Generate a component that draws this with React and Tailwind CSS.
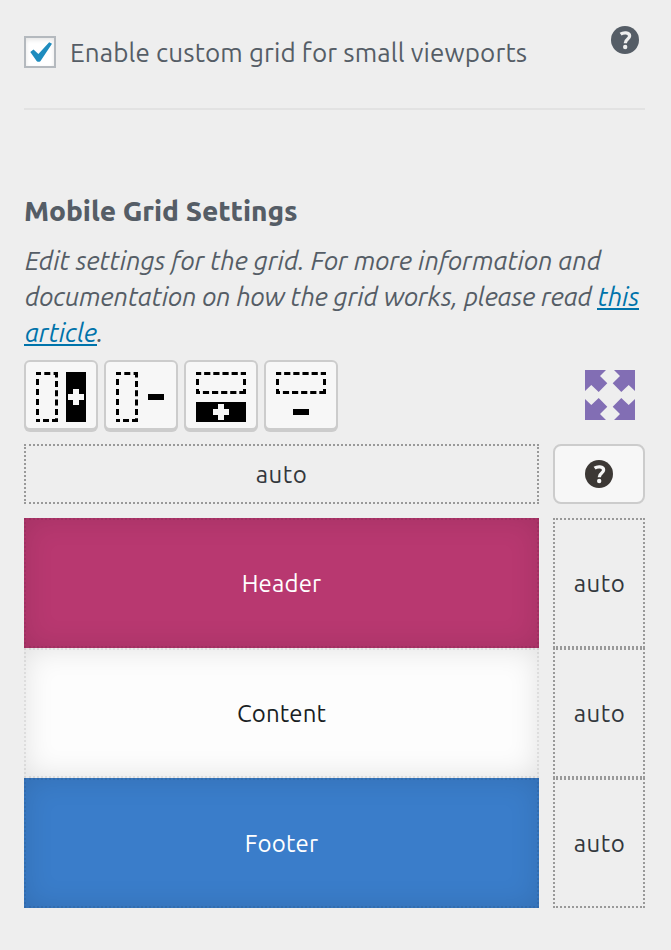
import React from "react";

const HelpIcon = ({ color, hole }) => (
  <svg width="28" height="28" viewBox="0 0 28 28" fill="none" className="block shrink-0">
    <circle cx="14" cy="14" r="14" fill={color} />
    <path d="M9.6 8.2C12 6.5 18.6 5.9 18.6 10.1C18.6 13.2 14.3 12.8 14.3 17.2" stroke={hole} strokeWidth="3.3" />
    <circle cx="14.2" cy="21" r="2.2" fill={hole} />
  </svg>
);

const ColumnOutline = () => (
  <g stroke="#000" strokeWidth="3">
    <path d="M1.5 0V50" strokeDasharray="6 4" strokeDashoffset="3" />
    <path d="M20.5 0V50" strokeDasharray="6 3.33" strokeDashoffset="0.4" />
    <path d="M0 1.5H22" strokeDasharray="6 3.3" strokeDashoffset="1" />
    <path d="M0 48.5H22" strokeDasharray="6 3" strokeDashoffset="2" />
  </g>
);

const RowOutline = () => (
  <g stroke="#000" strokeWidth="3">
    <path d="M1.5 0V22" strokeDasharray="6 4" strokeDashoffset="3" />
    <path d="M48.5 0V22" strokeDasharray="6 4" strokeDashoffset="3" />
    <path d="M0 1.5H50" strokeDasharray="6.2 2.95" strokeDashoffset="1" />
    <path d="M0 20.5H50" strokeDasharray="6.2 2.9" strokeDashoffset="2.2" />
  </g>
);

const Tool = ({ label, children }) => (
  <button
    aria-label={label}
    className="flex h-[70px] w-[74px] items-start justify-center rounded-md border-2 border-[#ccc] bg-[#f7f7f7] pt-[10px] shadow-[0_2px_0_#ccc]"
  >
    <svg width="50" height="50" viewBox="0 0 50 50" className="block">
      {children}
    </svg>
  </button>
);

const Corner = ({ transform }) => (
  <path d="M0 0H21L15 6L22.3 13.2L13.7 22L6.3 15L0 21Z" transform={transform} />
);

const areas = [
  { name: "Header", style: "bg-[#b83870] text-white" },
  { name: "Content", style: "bg-[#fdfdfd] text-[#191e23]" },
  { name: "Footer", style: "bg-[#3a7dca] text-white" },
];

const linkStyle = "-ml-px pl-px text-[#0073aa] shadow-[inset_0_-2px_0_#0073aa] h-[28px] inline-block leading-[29px]";

export default function App() {
  return (
    <main className="h-[950px] w-[671px] bg-[#eee] pl-6 pr-[26px] pt-6 font-['Ubuntu','Noto_Sans',sans-serif] text-[26px] font-[430] text-[#555d66]">
      <div className="flex h-[86px] items-start justify-between border-b-2 border-[#e2e2e2]">
        <label className="mt-3 flex h-8 items-center gap-[14px]">
          <span className="h-8 w-8 border-2 border-[#b4b9be] bg-white shadow-[inset_0_2px_4px_rgba(0,0,0,0.1)]">
            <svg width="28" height="28" viewBox="2 2 28 28">
              <path d="M6.3 16L9.5 13.4L14.4 18L25.2 6.2L28 7.7L16.4 25.2Q14.6 26.4 12.8 25.2Z" fill="#1e8cbe" />
            </svg>
          </span>
          <span className="whitespace-nowrap text-[26px] tracking-[0.13px]">Enable custom grid for small viewports</span>
        </label>
        <div className="mr-[6px] mt-[2px]">
          <HelpIcon color="#555d66" hole="#eee" />
        </div>
      </div>

      <h2 className="mt-[83px] h-9 whitespace-nowrap text-[28px] font-extrabold leading-9 tracking-[-0.05px]">
        Mobile Grid Settings
      </h2>
      <p className="mt-[14px] h-[108px] whitespace-nowrap pl-px text-[26px] font-normal italic leading-9">
        <span className="block h-9 tracking-[-0.09px]">Edit settings for the grid. For more information and</span>
        <span className="block h-9 tracking-[-0.17px]">
          documentation on how the grid works, please read <a href="#" className={linkStyle}>this</a>
        </span>
        <span className="block h-9 tracking-[-0.17px]">
          <a href="#" className={linkStyle}>article</a>.
        </span>
      </p>

      <div className="mt-[9px] flex h-[70px] items-start justify-between">
        <div className="flex gap-[6px]">
          <Tool label="Add column">
            <ColumnOutline />
            <path d="M30 0H50V50H30Z" />
            <path d="M37 17H43V22H48V28H43V33H37V28H32V22H37Z" fill="#f7f7f7" />
          </Tool>
          <Tool label="Remove column">
            <ColumnOutline />
            <path d="M32 22H48V28H32Z" />
          </Tool>
          <Tool label="Add row">
            <RowOutline />
            <path d="M0 30H50V50H0Z" />
            <path d="M22 32H28V37H33V43H28V48H22V43H17V37H22Z" fill="#f7f7f7" />
          </Tool>
          <Tool label="Remove row">
            <RowOutline />
            <path d="M17 37H33V43H17Z" />
          </Tool>
        </div>
        <svg width="50" height="50" viewBox="0 0 50 50" fill="#826eb4" className="mr-[10px] mt-[10px]">
          <Corner />
          <Corner transform="matrix(-1 0 0 1 50 0)" />
          <Corner transform="matrix(1 0 0 -1 0 50)" />
          <Corner transform="matrix(-1 0 0 -1 50 50)" />
        </svg>
      </div>

      <div className="mt-[14px] grid grid-cols-[515px_92px] gap-x-[14px] text-[24px] text-[#32373c]">
        <div className="mb-[14px] flex h-[60px] items-center justify-center border-2 border-dotted border-[#999] pt-[2px] tracking-[0.5px]">auto</div>
        <button className="flex h-[60px] items-center justify-center rounded-lg border-2 border-[#ccc] bg-[#f7f7f7]">
          <HelpIcon color="#3c3835" hole="#f7f7f7" />
        </button>
        {areas.map((a) => (
          <React.Fragment key={a.name}>
            <div className={`h-[130px] shadow-[inset_0_0_30px_rgba(0,0,0,0.12)] ${a.style}`}>
              <div className="flex h-full items-center justify-center border-2 border-dotted border-black/7 pt-[2px]">
                <span className="tracking-[0.15px]">{a.name}</span>
              </div>
            </div>
            <div className="flex h-[130px] items-center justify-center border-2 border-dotted border-[#999] pl-px pt-[2px] tracking-[0.5px]">auto</div>
          </React.Fragment>
        ))}
      </div>
    </main>
  );
}
